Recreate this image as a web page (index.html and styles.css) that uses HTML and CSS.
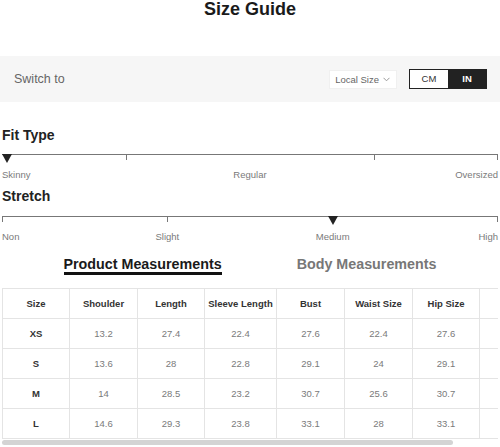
FILE: index.html
```html
<!DOCTYPE html>
<html lang="en">
<head>
    <meta charset="UTF-8">
    <meta name="viewport" content="width=device-width, initial-scale=1.0">
    <title>Size Guide</title>
    <link rel="stylesheet" href="styles.css">
</head>
<body>
    <h1 class="title">Size Guide</h1>

    <div class="unit-bar">
        <span class="switch-label">Switch to</span>
        <div class="unit-controls">
            <div class="local-size">
                Local Size
                <svg class="chevron" width="7" height="5" viewBox="0 0 7 5"><polyline points="0.5,0.8 3.5,3.8 6.5,0.8" fill="none" stroke="#999" stroke-width="1"/></svg>
            </div>
            <div class="unit-toggle">
                <span class="unit">CM</span>
                <span class="unit active">IN</span>
            </div>
        </div>
    </div>

    <div class="content">
        <section class="fit-block">
            <h2 class="scale-title">Fit Type</h2>
            <div class="scale">
                <span class="tick" style="left: 25%"></span>
                <span class="tick" style="left: 75%"></span>
                <span class="tick tick-end"></span>
                <span class="marker marker-start"></span>
            </div>
            <div class="scale-labels fit-labels">
                <span>Skinny</span>
                <span>Regular</span>
                <span>Oversized</span>
            </div>
        </section>

        <section class="fit-block stretch-block">
            <h2 class="scale-title">Stretch</h2>
            <div class="scale">
                <span class="tick" style="left: 0"></span>
                <span class="tick" style="left: 33.333%"></span>
                <span class="tick tick-end"></span>
                <span class="marker" style="left: 66.667%"></span>
            </div>
            <div class="scale-labels stretch-labels">
                <span>Non</span>
                <span>Slight</span>
                <span>Medium</span>
                <span>High</span>
            </div>
        </section>

        <div class="tabs">
            <span class="tab active">Product Measurements</span>
            <span class="tab">Body Measurements</span>
        </div>

        <div class="table-wrap">
            <table class="size-table">
                <colgroup>
                    <col style="width: 67px">
                    <col style="width: 68px">
                    <col style="width: 67px">
                    <col style="width: 72px">
                    <col style="width: 68px">
                    <col style="width: 68px">
                    <col style="width: 67px">
                    <col style="width: 67px">
                </colgroup>
                <thead>
                    <tr>
                        <th>Size</th>
                        <th>Shoulder</th>
                        <th>Length</th>
                        <th>Sleeve Length</th>
                        <th>Bust</th>
                        <th>Waist Size</th>
                        <th>Hip Size</th>
                        <th></th>
                    </tr>
                </thead>
                <tbody>
                    <tr>
                        <td class="size">XS</td><td>13.2</td><td>27.4</td><td>22.4</td><td>27.6</td><td>22.4</td><td>27.6</td><td></td>
                    </tr>
                    <tr>
                        <td class="size">S</td><td>13.6</td><td>28</td><td>22.8</td><td>29.1</td><td>24</td><td>29.1</td><td></td>
                    </tr>
                    <tr>
                        <td class="size">M</td><td>14</td><td>28.5</td><td>23.2</td><td>30.7</td><td>25.6</td><td>30.7</td><td></td>
                    </tr>
                    <tr>
                        <td class="size">L</td><td>14.6</td><td>29.3</td><td>23.8</td><td>33.1</td><td>28</td><td>33.1</td><td></td>
                    </tr>
                </tbody>
            </table>
        </div>
        <div class="scroll-track">
            <div class="scroll-thumb"></div>
        </div>
    </div>
</body>
</html>
```

FILE: styles.css
```css
body {
    font-family: "Liberation Sans", Arial, sans-serif;
    margin: 0;
    background: white;
    color: #222;
}

.title {
    margin: 0;
    font-size: 18px;
    line-height: 18px;
    font-weight: bold;
    text-align: center;
    color: #1a1a1a;
}

.unit-bar {
    margin-top: 38px;
    height: 46px;
    background: #f6f6f6;
    display: flex;
    align-items: center;
    justify-content: space-between;
    padding: 0 13px 0 14px;
}

.switch-label {
    font-size: 12.5px;
    color: #666;
}

.unit-controls {
    display: flex;
    align-items: center;
    gap: 12px;
}

.local-size {
    display: flex;
    align-items: center;
    height: 19px;
    padding: 0 6px 0 5px;
    background: white;
    border: 1px solid #f0f0f0;
    box-sizing: border-box;
    font-size: 9.5px;
    color: #666;
}

.chevron {
    margin-left: 4px;
}

.unit-toggle {
    display: flex;
    border: 1px solid #222;
}

.unit {
    width: 38px;
    height: 18px;
    line-height: 18px;
    text-align: center;
    font-size: 9.5px;
    color: #333;
    background: white;
}

.unit.active {
    background: #222;
    color: white;
    font-weight: bold;
}

.content {
    padding: 0 2px;
}

.fit-block {
    margin-top: 25px;
}

.stretch-block {
    margin-top: 7px;
}

.scale-title {
    margin: 0;
    font-size: 14px;
    line-height: 16px;
    font-weight: bold;
    color: #222;
}

.scale {
    position: relative;
    height: 14px;
    margin-top: 11px;
    border-top: 1px solid #777;
}

.stretch-block .scale {
    margin-top: 12px;
}

.tick {
    position: absolute;
    top: 0;
    width: 1px;
    height: 5px;
    background: #777;
}

.tick-end {
    left: calc(100% - 1px);
}

.marker {
    position: absolute;
    top: -1px;
    width: 0;
    height: 0;
    border-left: 5px solid transparent;
    border-right: 5px solid transparent;
    border-top: 9px solid #222;
    transform: translateX(-50%);
}

.marker-start {
    left: 0;
    transform: none;
}

.scale-labels {
    display: grid;
    font-size: 9.5px;
    line-height: 12px;
    color: #7a7a7a;
}

.scale-labels span {
    text-align: center;
}

.scale-labels span:first-child {
    text-align: left;
}

.scale-labels span:last-child {
    text-align: right;
}

.fit-labels {
    grid-template-columns: 1fr 2fr 1fr;
}

.stretch-labels {
    grid-template-columns: 1fr 2fr 2fr 1fr;
}

.tabs {
    display: flex;
    justify-content: center;
    gap: 75px;
    margin-top: 13px;
}

.tab {
    font-size: 14.3px;
    line-height: 16px;
    font-weight: bold;
    color: #777;
    border-bottom: 3px solid transparent;
}

.tab.active {
    color: #1a1a1a;
    border-bottom-color: #111;
}

.table-wrap {
    margin-top: 13px;
    overflow: hidden;
}

.size-table {
    border-collapse: collapse;
    table-layout: fixed;
    width: 544px;
}

.size-table th,
.size-table td {
    height: 29px;
    padding: 0;
    border: 1px solid #e4e4e4;
    text-align: center;
    vertical-align: middle;
}

.size-table th {
    font-size: 9.5px;
    font-weight: bold;
    color: #333;
}

.size-table td {
    font-size: 9.5px;
    color: #7a7a7a;
}

.size-table td.size {
    font-weight: bold;
    color: #333;
}

.scroll-track {
    margin-top: 1px;
    height: 5px;
}

.scroll-thumb {
    width: 451px;
    height: 5px;
    border-radius: 3px;
    background: #d4d4d4;
}
```
